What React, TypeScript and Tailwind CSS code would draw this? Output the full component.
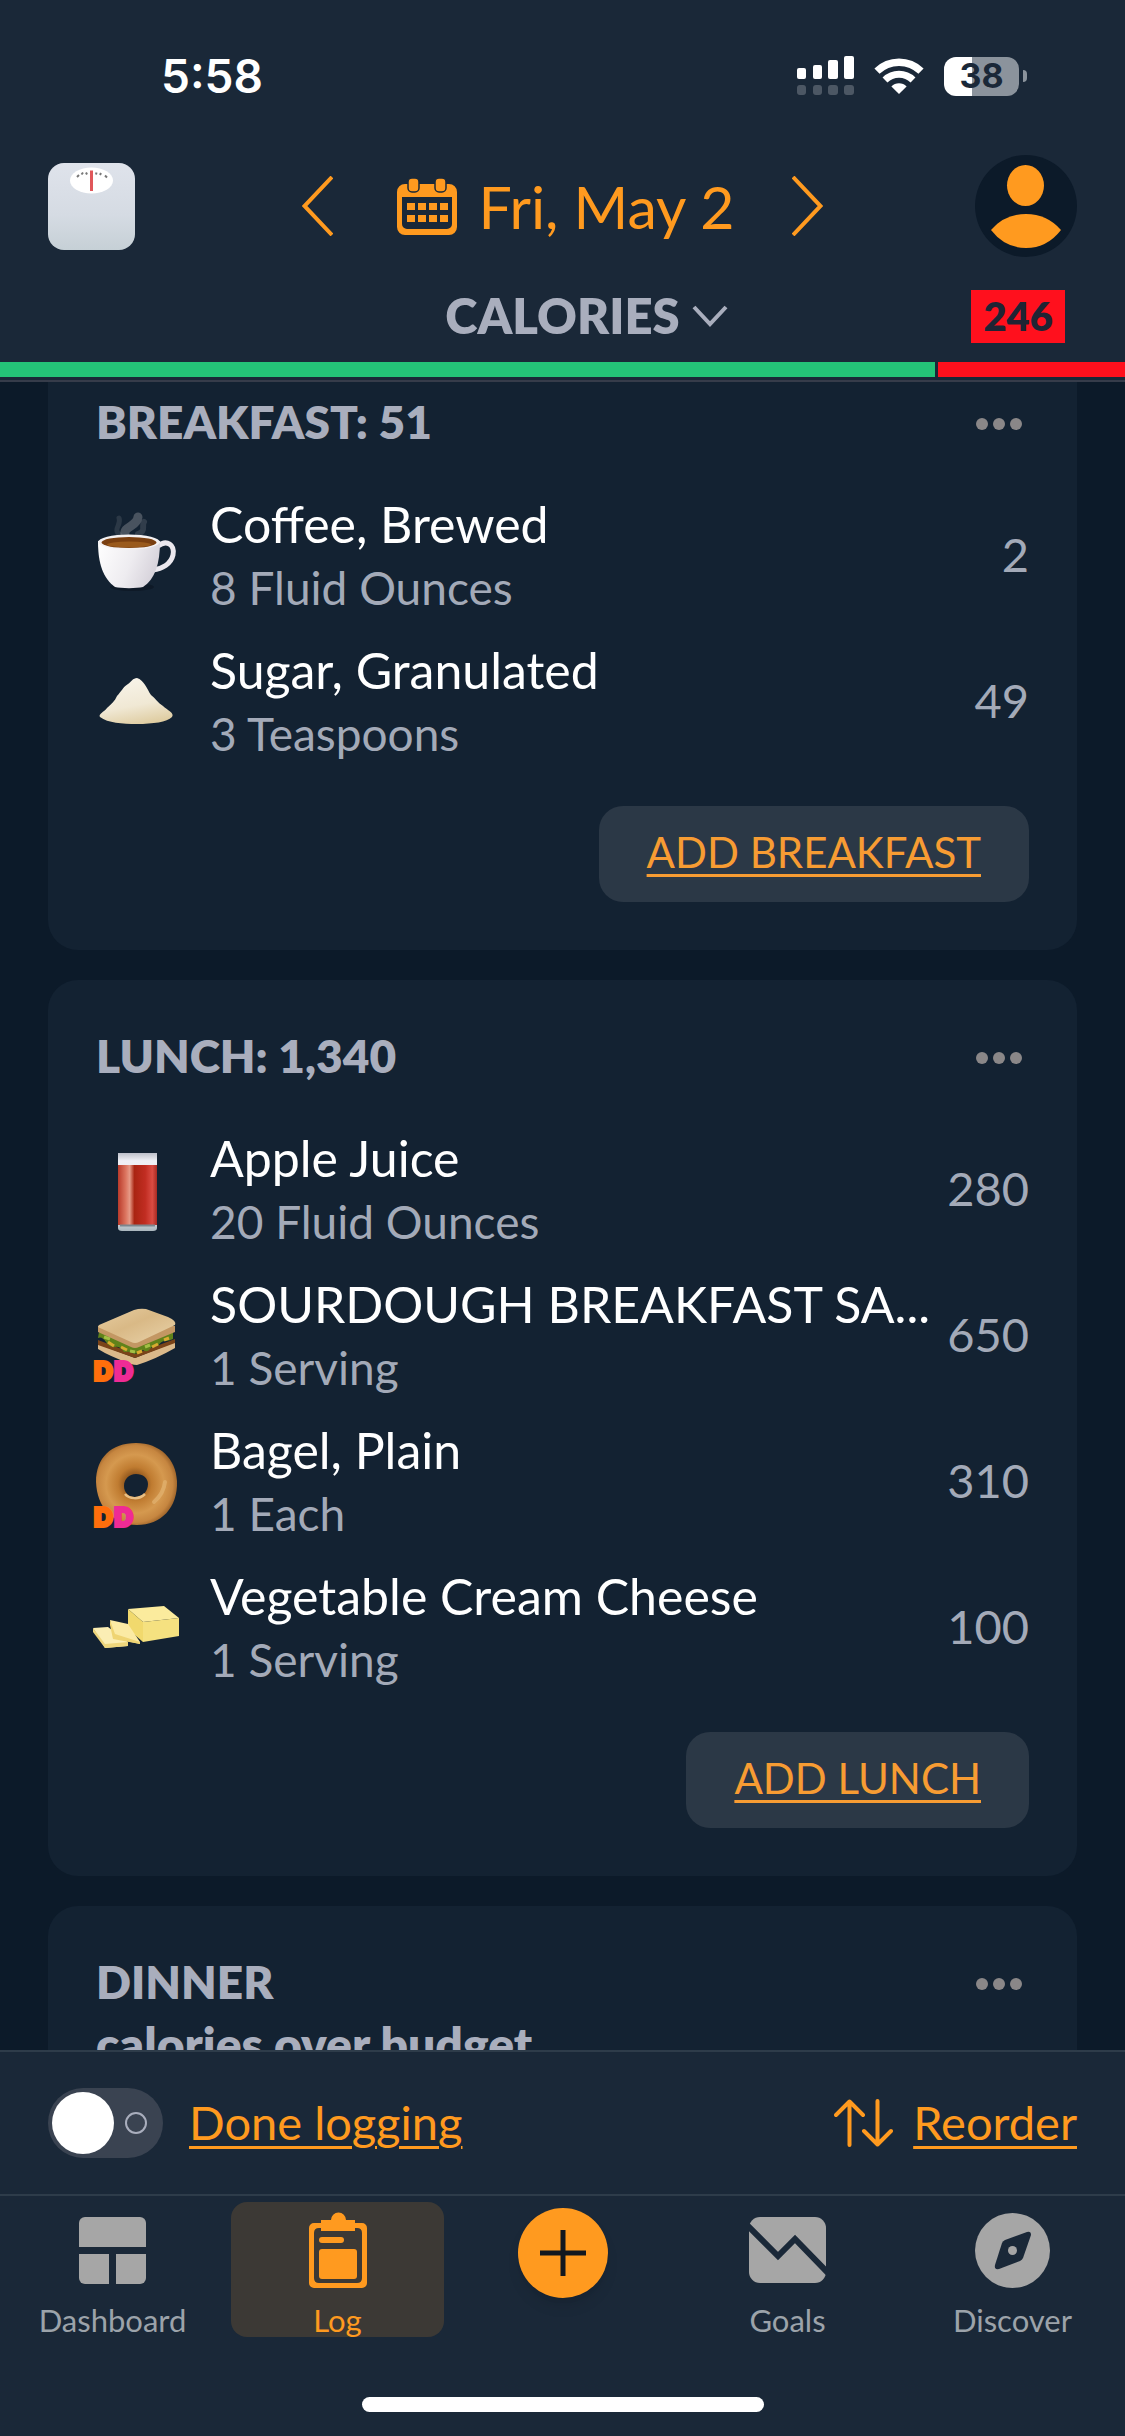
import React, { useState } from "react";

interface Food {
  name: string;
  serving: string;
  calories: number;
  icon: React.ReactNode;
  branded?: boolean;
}

interface MealCardProps {
  title: string;
  action?: string;
  note?: string;
  foods?: Food[];
  className?: string;
}

/* ---------- Status bar icons ---------- */

const SignalIcon = () => (
  <svg width="57" height="40" viewBox="0 0 57 40" fill="#fff" aria-hidden="true">
    <rect x="0" y="12" width="9" height="11" rx="2" />
    <rect x="16" y="9" width="9" height="14" rx="2" />
    <rect x="31" y="4" width="10" height="19" rx="2" />
    <rect x="47" y="0" width="10" height="23" rx="2" />
    <g opacity="0.22">
      <rect x="0" y="29" width="9" height="10" rx="3" />
      <rect x="16" y="29" width="9" height="10" rx="3" />
      <rect x="31" y="29" width="10" height="10" rx="3" />
      <rect x="47" y="29" width="10" height="10" rx="3" />
    </g>
  </svg>
);

const WifiIcon = () => (
  <svg width="50" height="37" viewBox="0 0 50 37" fill="none" stroke="#fff" aria-hidden="true">
    <path d="M3 13.2a31.5 31.5 0 0 1 44 0" strokeWidth="7.4" />
    <path d="M11 22a20 20 0 0 1 28 0" strokeWidth="7" />
    <path d="M25 36l-7.600-7.600a10.800 10.800 0 0 1 15.200 0z" fill="#fff" stroke="none" />
  </svg>
);

const Battery = () => (
  <div className="flex items-center gap-1">
    <div className="flex h-[39px] w-[75px] items-center justify-center rounded-xl bg-linear-to-r from-white from-38% to-[#8b939c] to-38% text-[34px] leading-none font-bold text-[#1a2838]">
      38
    </div>
    <div className="h-3 w-1 rounded-r-full bg-[#8b939c]" />
  </div>
);

/* ---------- Header icons ---------- */

const ScaleIcon = () => (
  <svg width="87" height="87" viewBox="0 0 87 87" aria-hidden="true">
    <defs>
      <linearGradient id="scale-body" x1="0" y1="0" x2="0" y2="1">
        <stop offset="0" stopColor="#dfe3eb" />
        <stop offset="0.6" stopColor="#d5dbe3" />
        <stop offset="1" stopColor="#c6d0d6" />
      </linearGradient>
    </defs>
    <rect width="87" height="87" rx="16" fill="url(#scale-body)" />
    <ellipse cx="43.500" cy="17.500" rx="21.500" ry="13" fill="#fff" />
    <path d="M29 14l2-2M33.500 11.500l1.500-2M38 9.500l1 2M48.500 9.500l-.5 2M53 10l-1 2M57 12.500l2 2" stroke="#777" strokeWidth="2" />
    <path d="M43.500 7.500v20.500" stroke="#e0575a" strokeWidth="3" />
  </svg>
);

const CalendarIcon = () => (
  <svg width="60" height="57" viewBox="0 0 60 57" aria-hidden="true">
    <path
      d="M8 6h44a8 8 0 0 1 8 8v35a8 8 0 0 1-8 8H8a8 8 0 0 1-8-8V14a8 8 0 0 1 8-8zM5 19v27a5 5 0 0 0 5 5h40a5 5 0 0 0 5-5V19z"
      fill="#ff9a1f"
      fillRule="evenodd"
    />
    <g fill="#ff9a1f" stroke="#1a2838" strokeWidth="1.500">
      <rect x="11" y="0" width="11" height="14" rx="4" />
      <rect x="38" y="0" width="11" height="14" rx="4" />
    </g>
    <g fill="#ff9a1f">
      <path d="M10 25h8v7h-8zM21 25h8v7h-8zM32 25h8v7h-8zM43 25h8v7h-8z" />
      <path d="M10 37h8v7h-8zM21 37h8v7h-8zM32 37h8v7h-8zM43 37h8v7h-8z" />
    </g>
  </svg>
);

const AvatarIcon = () => (
  <svg width="102" height="102" viewBox="0 0 102 102" aria-hidden="true">
    <circle cx="51" cy="51" r="51" fill="#0c1a29" />
    <ellipse cx="50.500" cy="30.500" rx="18.500" ry="20.500" fill="#ff9a1f" />
    <path d="M16 75q14-16 35-16t35 16q-14 18-35 18t-35-18z" fill="#ff9a1f" />
  </svg>
);

/* ---------- Food icons ---------- */

const CoffeeIcon = () => (
  <svg viewBox="0 0 84 84" className="size-[84px] overflow-visible" aria-hidden="true">
    <defs>
      <linearGradient id="cup" x1="0" y1="0" x2="1" y2="0.300">
        <stop offset="0" stopColor="#fff" />
        <stop offset="0.600" stopColor="#eeecf0" />
        <stop offset="1" stopColor="#d8d4dc" />
      </linearGradient>
    </defs>
    <ellipse cx="40" cy="73" rx="22" ry="4" fill="#0b1420" opacity="0.6" />
    <path d="M28 21c-8-6 2-10-1-17" fill="none" stroke="#8b8f96" strokeWidth="5" strokeLinecap="round" opacity="0.2" />
    <path d="M33 21c-2-9 12-8 13-18" fill="none" stroke="#9a9da3" strokeWidth="9" strokeLinecap="round" opacity="0.4" />
    <path d="M46 20c9-3 3-8 6-12" fill="none" stroke="#8b8f96" strokeWidth="6" strokeLinecap="round" opacity="0.25" />
    <path d="M66 32c9-7 17-1 15 9-2 9-11 14-20 15" fill="none" stroke="#ebe8ee" strokeWidth="5" />
    <path d="M6 27c0 23 5 37 17 46 6 1.500 22 1.500 28 0C63 65 68 50 68 27z" fill="url(#cup)" />
    <ellipse cx="37" cy="28" rx="31" ry="7.500" fill="#f4f1f2" />
    <ellipse cx="37" cy="28.500" rx="27.500" ry="5.500" fill="#7a3f10" />
    <ellipse cx="37" cy="30.500" rx="22" ry="3" fill="#9a5a1c" />
  </svg>
);

const SugarIcon = () => (
  <svg viewBox="0 0 84 84" className="size-[84px] overflow-visible" aria-hidden="true">
    <defs>
      <linearGradient id="sugar" x1="0.300" y1="0" x2="0.600" y2="1">
        <stop offset="0" stopColor="#f8f4ea" />
        <stop offset="0.600" stopColor="#f0e8d4" />
        <stop offset="1" stopColor="#dfcda2" />
      </linearGradient>
    </defs>
    <path d="M45 18c-4 0-6 4-9 6-5 3-7 8-11 12-2 5-6 8-10 12-3 4-9 6-7 9 8 6 22 7 37 7 16 0 30-2 35-7 3-4-5-7-9-11-5-3-8-8-12-11-4-6-7-15-14-17z" fill="url(#sugar)" />
  </svg>
);

const JuiceIcon = () => (
  <svg viewBox="0 0 84 84" className="size-[84px] overflow-visible" aria-hidden="true">
    <defs>
      <linearGradient id="juice" x1="0" y1="0" x2="1" y2="0">
        <stop offset="0" stopColor="#b93a2a" />
        <stop offset="0.200" stopColor="#dc7560" />
        <stop offset="0.300" stopColor="#e69a87" />
        <stop offset="0.420" stopColor="#a92412" />
        <stop offset="0.700" stopColor="#c12d22" />
        <stop offset="0.880" stopColor="#da4c43" />
        <stop offset="1" stopColor="#a82a22" />
      </linearGradient>
      <linearGradient id="glass" x1="0" y1="0" x2="0" y2="1">
        <stop offset="0" stopColor="#bcbfc9" />
        <stop offset="0.100" stopColor="#f0f0f5" />
        <stop offset="0.800" stopColor="#e7e9ef" />
        <stop offset="1" stopColor="#a9b6bd" />
      </linearGradient>
    </defs>
    <path d="M26 5h39v75q0 3-4 3H30q-4 0-4-3z" fill="url(#glass)" />
    <path d="M26 17h39v60H26z" fill="url(#juice)" />
    <path d="M28 77.500h35" stroke="#7c868d" strokeWidth="2" />
  </svg>
);

const SandwichIcon = () => (
  <svg viewBox="0 0 84 84" className="size-[84px] overflow-visible" aria-hidden="true">
    <defs>
      <linearGradient id="bread" x1="0" y1="0" x2="1" y2="1">
        <stop offset="0" stopColor="#e6cda1" />
        <stop offset="0.450" stopColor="#d9b986" />
        <stop offset="1" stopColor="#e9d3aa" />
      </linearGradient>
    </defs>
    <path d="M6 50l37 14 40-16v6q-19 11-38 17-3 0-6-1Q17 62 6 55z" fill="#dbb98a" />
    <path d="M6 46l37 14 40-15v4L43 64 6 51z" fill="#7a4318" />
    <path d="M7 38l36 14 38-14v7q-4 2-8 2t-7 5q-5-1-8 3t-7 1q-6 5-10 3t-9-1q-4-6-9-5t-9-5-8-4z" fill="#60821a" />
    <path d="M16 48l6 4M29 53l6 3M45 59l5-2M60 53l6-3M72 46l5-2" stroke="#d9ab30" strokeWidth="3" />
    <path d="M12 43l6 2M38 57l5 1M53 53l5-2" stroke="#a3bf45" strokeWidth="3" />
    <path d="M6 32v6l33 15q4 2 8 0l36-15v-6z" fill="#c39763" />
    <path d="M7 31L42 16q6-2 12-1l22 8q9 4 7 8L47 48q-4 2-8 0L8 34q-3-1-1-3z" fill="url(#bread)" />
  </svg>
);

const BagelIcon = () => (
  <svg viewBox="0 0 84 84" className="size-[84px] overflow-visible" aria-hidden="true">
    <defs>
      <radialGradient id="bagel" cx="0.480" cy="0.500" r="0.550">
        <stop offset="0.200" stopColor="#8f551c" />
        <stop offset="0.380" stopColor="#c07c31" />
        <stop offset="0.650" stopColor="#d5994f" />
        <stop offset="0.850" stopColor="#c68640" />
        <stop offset="1" stopColor="#8e5722" />
      </radialGradient>
    </defs>
    <path
      d="M44 3c24 0 40 16 41 38 1 27-16 44-40 44C21 84 5 68 4 42 4 18 19 3 44 3zM44 34c-7 0-12 5-12 12 0 6 4 11 11 11 8 0 13-6 13-13 0-6-5-10-12-10z"
      fill="url(#bagel)"
      fillRule="evenodd"
    />
    <path d="M33 54c4 5 14 6 20 0" fill="none" stroke="#e9bf83" strokeWidth="2.500" />
    <path d="M62 62c7-6 10-12 11-20" fill="none" stroke="#e3b372" strokeWidth="4" strokeLinecap="round" opacity="0.7" />
  </svg>
);

const ButterIcon = () => (
  <svg viewBox="0 0 84 84" className="size-[84px] overflow-visible" aria-hidden="true">
    <path d="M36 23l36-3 15 12-36 4z" fill="#fbeb9d" />
    <path d="M36 23l15 13v20l-15-13z" fill="#f1d96d" />
    <path d="M51 36l36-4v18l-36 6z" fill="#f5e180" />
    <path d="M1 42l15-1 20 15v4l-23 2z" fill="#fbeeb4" />
    <path d="M1 42l12 16v4L1 46zM13 58l23-2v4l-23 2z" fill="#eed67c" />
    <path d="M18 34l18 4 12 18v2l-27-6z" fill="#fbeaa4" />
    <path d="M18 34l5 14 25 8v2l-27-5-3-14z" fill="#efd473" />
  </svg>
);

/* ---------- Tab icons ---------- */

const DashboardIcon = () => (
  <svg width="67" height="67" viewBox="0 0 67 67" fill="#a6a6a6" aria-hidden="true">
    <path d="M6 0h55a6 6 0 0 1 6 6v24H0V6a6 6 0 0 1 6-6z" />
    <path d="M0 37h30v30H6a6 6 0 0 1-6-6z" />
    <path d="M37 37h30v24a6 6 0 0 1-6 6H37z" />
  </svg>
);

const LogIcon = () => (
  <svg width="58" height="76" viewBox="0 0 58 76" fill="#ff9a1f" aria-hidden="true">
    <path
      d="M5 11h48a5 5 0 0 1 5 5v55a5 5 0 0 1-5 5H5a5 5 0 0 1-5-5V16a5 5 0 0 1 5-5zM10 16q-5 0-5 5v45q0 5 5 5h38q5 0 5-5V21q0-5-5-5z"
      fillRule="evenodd"
    />
    <path d="M12 8h10a7.500 7.500 0 0 1 15 0h9v11H12z" />
    <rect x="10" y="25" width="25" height="6" rx="3" />
    <rect x="10" y="37" width="38" height="30" rx="3" />
  </svg>
);

const GoalsIcon = () => (
  <svg width="77" height="66" viewBox="0 0 77 66" aria-hidden="true">
    <rect width="77" height="66" rx="11" fill="#a6a6a6" />
    <path d="M-3 7l32 32 17-17 34 35" fill="none" stroke="#1a2838" strokeWidth="6" />
  </svg>
);

const DiscoverIcon = () => (
  <svg width="75" height="75" viewBox="0 0 75 75" aria-hidden="true">
    <circle cx="37.500" cy="37.500" r="37.500" fill="#a6a6a6" />
    <path d="M30 27l22-8q4-1 4 3l-8 23q-1 2-3 3l-21 8q-5 1-4-4l7-22q1-2 3-3z" fill="#1a2838" />
    <circle cx="37.500" cy="37.500" r="4.500" fill="#a6a6a6" />
  </svg>
);

const breakfast: Food[] = [
  { name: "Coffee, Brewed", serving: "8 Fluid Ounces", calories: 2, icon: <CoffeeIcon /> },
  { name: "Sugar, Granulated", serving: "3 Teaspoons", calories: 49, icon: <SugarIcon /> },
];

const lunch: Food[] = [
  { name: "Apple Juice", serving: "20 Fluid Ounces", calories: 280, icon: <JuiceIcon /> },
  { name: "SOURDOUGH BREAKFAST SA...", serving: "1 Serving", calories: 650, icon: <SandwichIcon />, branded: true },
  { name: "Bagel, Plain", serving: "1 Each", calories: 310, icon: <BagelIcon />, branded: true },
  { name: "Vegetable Cream Cheese", serving: "1 Serving", calories: 100, icon: <ButterIcon /> },
];

const FoodRow = ({ food }: { food: Food }) => (
  <li className="flex h-[146px] items-center">
    <div className="relative -ml-1 mr-[34px] shrink-0">
      {food.icon}
      {food.branded && (
        <span className="absolute top-[66px] left-0.5 flex gap-0.5 text-2xl leading-[21px] font-black">
          <span className="text-[#ff6e0c] [-webkit-text-stroke:4px_#ff6e0c]">D</span>
          <span className="text-[#ef2b95] [-webkit-text-stroke:4px_#ef2b95]">D</span>
        </span>
      )}
    </div>
    <div className="min-w-0 flex-1">
      <p className="truncate text-[50px] leading-[64px] text-white">{food.name}</p>
      <p className="truncate text-[46px] leading-[64px] text-[#a3aab8]">{food.serving}</p>
    </div>
    <span className="ml-4 pb-1 text-[47px] text-[#a3aab8]">{food.calories}</span>
  </li>
);

const MealCard = ({ title, action, note, foods = [], className = "rounded-[30px] pt-11" }: MealCardProps) => (
  <section className={`bg-[#132232] px-12 pb-12 ${className}`}>
    <div className="flex h-16 items-center justify-between">
      <h2 className="text-[46px] leading-[60px] font-extrabold text-[#a9aebd]">{title}</h2>
      <button className="flex gap-[5px] pt-1 pr-[7px]" aria-label={`${title} options`}>
        <span className="size-3 rounded-full bg-[#8a8788]" />
        <span className="size-3 rounded-full bg-[#8a8788]" />
        <span className="size-3 rounded-full bg-[#8a8788]" />
      </button>
    </div>
    {note && <p className="text-[48px] leading-[60px] font-extrabold text-[#a9aebd]">{note}</p>}
    {foods.length > 0 && (
      <ul className="mt-[29px]">
        {foods.map((food) => (
          <FoodRow key={food.name} food={food} />
        ))}
      </ul>
    )}
    {action && (
      <div className="mt-[31px] flex justify-end">
        <button className="h-24 rounded-3xl bg-[#2b3846] px-12 pb-1 text-[42px] text-[#f79c33] underline decoration-[3px] underline-offset-[6px]">
          {action}
        </button>
      </div>
    )}
  </section>
);

const Header = () => (
  <header className="border-b-2 border-[#363c4a] bg-[#1a2838] pb-[3px]">
    <div className="flex h-[152px] items-center justify-between pr-[98px] pl-[161px] font-[Inter,sans-serif]">
      <time className="text-[46px] font-semibold text-white">5:58</time>
      <div className="flex items-center gap-5">
        <SignalIcon />
        <WifiIcon />
        <Battery />
      </div>
    </div>
    <div className="grid h-[108px] grid-cols-[1fr_auto_1fr] items-center px-12">
      <button className="justify-self-start" aria-label="Weigh in">
        <ScaleIcon />
      </button>
      <div className="flex items-center text-[#ff9a1f]">
        <button aria-label="Previous day">
          <svg width="31" height="60" viewBox="0 0 31 60" fill="none" stroke="currentColor" strokeWidth="4">
            <path d="M30 1L2.500 30 30 59" />
          </svg>
        </button>
        <button className="mr-[58px] ml-16 flex items-center gap-[22px] text-[59px] leading-none whitespace-nowrap">
          <CalendarIcon />
          Fri, May 2
        </button>
        <button aria-label="Next day">
          <svg width="31" height="60" viewBox="0 0 31 60" fill="none" stroke="currentColor" strokeWidth="4">
            <path d="M1 1l27.500 29L1 59" />
          </svg>
        </button>
      </div>
      <button className="justify-self-end" aria-label="Profile">
        <AvatarIcon />
      </button>
    </div>
    <div className="grid grid-cols-[1fr_auto_1fr] items-center px-12 pt-[30px] pb-[19px]">
      <button className="col-start-2 flex items-center gap-3 pb-0.5 pl-12 text-[49px] leading-none font-extrabold text-[#a9aebd]">
        CALORIES
        <svg width="36" height="22" viewBox="0 0 36 22" fill="none" stroke="currentColor" strokeWidth="4">
          <path d="M2 2l16 17L34 2" />
        </svg>
      </button>
      <span className="mr-3 flex h-[53px] items-center justify-self-end bg-[#ff101d] px-3 pb-0.5 text-[40px] leading-none font-extrabold text-[#1f2434]">
        246
      </span>
    </div>
    <div className="flex h-[15px] gap-[3px]">
      <div className="w-[83.1%] bg-[#24c378]" />
      <div className="flex-1 bg-[#ff101d]" />
    </div>
  </header>
);

const Toolbar = () => {
  const [done, setDone] = useState(false);

  return (
    <div className="flex h-36 items-center justify-between border-t-2 border-[#2e3c4a] px-12 text-[47px] text-[#ff9a1f]">
      <label className="flex items-center gap-[26px]">
        <input type="checkbox" role="switch" className="peer sr-only" checked={done} onChange={() => setDone(!done)} />
        <span className="flex h-[70px] w-[115px] items-center gap-[11px] rounded-full bg-[#3a4351] px-1 peer-checked:flex-row-reverse">
          <span className="size-[62px] rounded-full bg-white" />
          <span className="size-[22px] rounded-full border-2 border-[#a9aebd]" />
        </span>
        <span className="pb-0.5 underline decoration-[3px] underline-offset-[6px]">Done logging</span>
      </label>
      <button className="flex items-center gap-5">
        <svg width="59" height="48" viewBox="0 0 59 48" fill="none" stroke="currentColor" strokeWidth="4" strokeLinecap="round" strokeLinejoin="round">
          <path d="M15.500 46V2.500M2 16L15.500 2.500 29 16M43.500 2v43.500M30 32l13.500 13.500L57 32" />
        </svg>
        <span className="pb-0.5 underline decoration-[3px] underline-offset-[6px]">Reorder</span>
      </button>
    </div>
  );
};

interface TabProps {
  label: string;
  icon: React.ReactNode;
  active?: boolean;
}

const Tab = ({ label, icon, active }: TabProps) => (
  <a
    href="#"
    aria-current={active ? "page" : undefined}
    className={`mx-1.5 flex h-[135px] flex-col items-center rounded-2xl text-[31px] leading-[45px] ${active ? "bg-[#3c3935] text-[#ff9a1f]" : "text-[#9ca3aa]"}`}
  >
    <span className="flex h-24 shrink-0 items-center">{icon}</span>
    {label}
  </a>
);

const TabBar = () => (
  <nav className="border-t-2 border-[#2e3c4a] pt-1.5 pb-6">
    <div className="grid grid-cols-5">
      <Tab label="Dashboard" icon={<DashboardIcon />} />
      <Tab label="Log" icon={<LogIcon />} active />
      <button className="mt-1.5 flex size-[90px] items-center justify-center justify-self-center rounded-full bg-[#ff9a1f] shadow-lg" aria-label="Add">
        <svg width="46" height="46" viewBox="0 0 46 46" stroke="#12181f" strokeWidth="5">
          <path d="M23 0v46M0 23h46" />
        </svg>
      </button>
      <Tab label="Goals" icon={<GoalsIcon />} />
      <Tab label="Discover" icon={<DiscoverIcon />} />
    </div>
    <div className="mx-auto mt-[60px] h-[15px] w-[402px] rounded-full bg-white" />
  </nav>
);

const App = () => (
  <div className="flex h-screen flex-col bg-[#0c1a29] font-[Lato,sans-serif]">
    <Header />
    <main className="flex min-h-0 flex-1 flex-col gap-[30px] overflow-hidden px-12">
      <MealCard title="BREAKFAST: 51" action="ADD BREAKFAST" foods={breakfast} className="rounded-b-[30px] pt-2" />
      <MealCard title="LUNCH: 1,340" action="ADD LUNCH" foods={lunch} />
      <MealCard title="DINNER" note="calories over budget" />
    </main>
    <footer className="bg-[#1a2838]">
      <Toolbar />
      <TabBar />
    </footer>
  </div>
);

export default App;
